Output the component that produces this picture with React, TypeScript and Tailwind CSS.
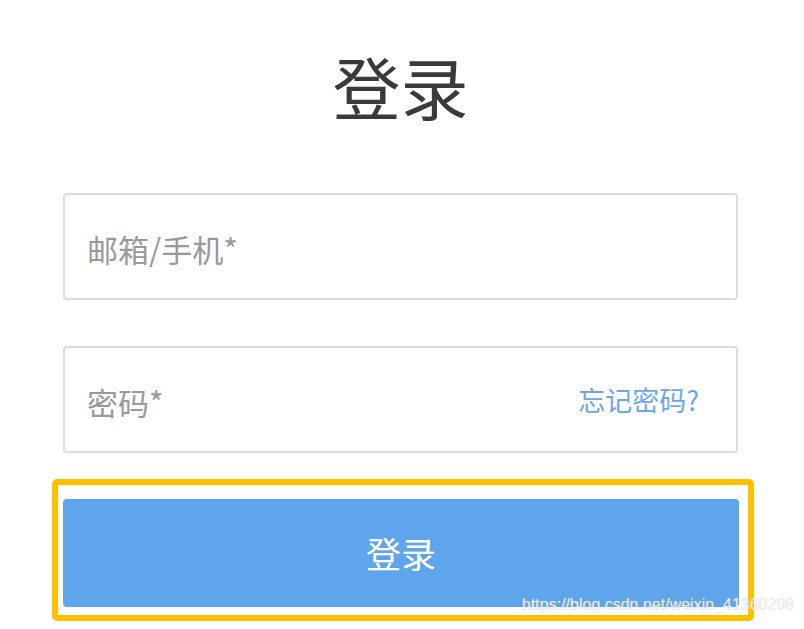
export default function App() {
  return (
    <div className="relative h-[629px] w-[804px] overflow-hidden bg-white font-['Noto_Sans_CJK_SC','Noto_Sans',sans-serif]">
      <div className="ml-[63px] w-[675px]">
        <h1 className="pt-[52px] text-center text-[68px] font-normal leading-none text-[#3a3a3a]">
          登录
        </h1>

        <form className="mt-[73px]" onSubmit={(event) => event.preventDefault()}>
          <input
            type="text"
            placeholder="邮箱/手机*"
            className="block h-[107px] w-full rounded-[4px] border-2 border-[#dcdcdc] bg-white pl-[22px] pt-[4px] text-[31px] text-[#333] outline-none placeholder:text-[#999]"
          />

          <div className="mt-[46px] flex h-[107px] items-center rounded-[4px] border-2 border-[#dcdcdc] bg-white pl-[22px] pr-[37px]">
            <input
              type="password"
              placeholder="密码*"
              className="h-full min-w-0 flex-1 bg-transparent pt-[4px] text-[31px] text-[#333] outline-none placeholder:text-[#999]"
            />
            <a href="#" className="pt-[2px] text-[27px] text-[#6aa7ea]">
              忘记密码?
            </a>
          </div>

          <div className="ml-[-11px] mt-[26px] w-[702px] rounded-[5px] border-[6px] border-[#ffc000] pb-[8px] pl-[5px] pr-[9px] pt-[14px]">
            <button
              type="submit"
              className="flex h-[108px] w-full items-center justify-center rounded-[4px] bg-[#5fa5eb] text-[35px] text-white"
            >
              登录
            </button>
          </div>
        </form>
      </div>

      <span className="absolute left-[522px] top-[597px] font-['Liberation_Sans',Arial,sans-serif] text-[16px] leading-none text-white/70 [text-shadow:0_0_1px_#c8c8c8]">
        https://blog.csdn.net/weixin_41360298
      </span>
    </div>
  );
}
